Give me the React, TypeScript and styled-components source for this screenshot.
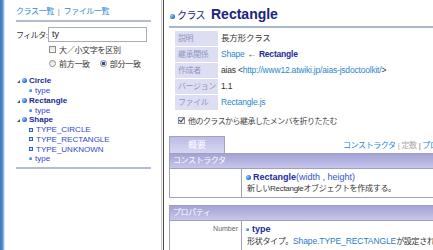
import React from "react";
import styled, { createGlobalStyle } from "styled-components";

const GlobalStyle = createGlobalStyle`
  html, body { margin: 0; padding: 0; background: #fff; }
  body {
    font-family: "Liberation Sans", "Noto Sans CJK JP", sans-serif;
    color: #333;
  }
`;

const Screen = styled.div`
  display: flex;
  width: 433px;
  height: 250px;
  overflow: hidden;
  background: #fff;
`;

const WindowEdge = styled.div`
  flex: none;
  width: 5px;
  background: linear-gradient(to right, #3d75ba 0, #5b93d3 3px, #c7daee 4px, #eef3f8 5px);
`;

/* ---------- sidebar ---------- */

const Sidebar = styled.aside`
  flex: none;
  width: 156px;
  box-sizing: border-box;
  padding: 6px 10px 0 11px;
`;

const SideNav = styled.nav`
  font-size: 8px;
  letter-spacing: -0.4px;
  line-height: 12px;
  padding-bottom: 2px;
  border-bottom: 2px solid #b3bdd0;
`;

const Link = styled.a<{ $bold?: boolean; $muted?: boolean }>`
  color: ${(p) => (p.$muted ? "#a8a8a8" : "#2a88d0")};
  font-weight: ${(p) => (p.$bold ? "bold" : "normal")};
  text-decoration: none;
`;

const Sep = styled.span<{ $tight?: boolean; $tone?: string }>`
  color: ${(p) => p.$tone ?? "#8585a8"};
  margin: 0 ${(p) => (p.$tight ? 2 : 4)}px;
`;

const FilterRow = styled.div`
  display: flex;
  align-items: center;
  height: 16px;
  margin-top: 4px;
`;

const FieldLabel = styled.span`
  width: 32px;
  font-size: 8px;
  letter-spacing: -0.5px;
  color: #333;
`;

const TextBox = styled.div`
  width: 99px;
  height: 15px;
  box-sizing: border-box;
  border: 1px solid #a6adb8;
  font-size: 9px;
  line-height: 13px;
  padding: 0 3px;
  color: #222;
`;

const OptionRow = styled.div`
  display: flex;
  align-items: center;
  height: 14px;
  margin-left: 33px;
  font-size: 8px;
  letter-spacing: -0.3px;
  color: #333;
`;

const Check = styled.span<{ $checked?: boolean }>`
  position: relative;
  display: inline-block;
  flex: none;
  width: 7px;
  height: 7px;
  box-sizing: border-box;
  border: 1px solid #8c8c8c;
  background: linear-gradient(#e6e6e6, #fafafa);
  margin-right: 3px;
  &::after {
    content: "";
    display: ${(p) => (p.$checked ? "block" : "none")};
    position: absolute;
    left: 1px;
    top: -1px;
    width: 2px;
    height: 4px;
    border: solid #2a3a7a;
    border-width: 0 1px 1px 0;
    transform: rotate(40deg);
  }
`;

const Radio = styled.span<{ $checked?: boolean }>`
  display: inline-block;
  flex: none;
  width: 7px;
  height: 7px;
  box-sizing: border-box;
  border-radius: 50%;
  border: 1px solid #8c8c8c;
  background: ${(p) =>
    p.$checked
      ? "radial-gradient(circle, #2c4a9a 0 1.6px, #e8eef8 2px)"
      : "linear-gradient(#e2e2e2, #fafafa)"};
  margin-right: 3px;
`;

const RadioGap = styled.span`
  width: 10px;
`;

const Tree = styled.ul`
  list-style: none;
  margin: 6px 0 0;
  padding: 0;
`;

const TreeRow = styled.li<{ $indent: number }>`
  display: flex;
  align-items: center;
  height: 9.75px;
  padding-left: ${(p) => p.$indent}px;
  font-size: 8px;
  white-space: nowrap;
`;

const Toggle = styled.span`
  width: 0;
  height: 0;
  border-left: 3px solid transparent;
  border-bottom: 3px solid #555;
  margin-right: 2px;
  margin-top: 2px;
`;

const Dot = styled.span<{ $size: number; $gap: number }>`
  display: inline-block;
  flex: none;
  width: ${(p) => p.$size}px;
  height: ${(p) => p.$size}px;
  border-radius: 50%;
  background: radial-gradient(circle at 35% 35%, #9ccaff, #1f6fd8 65%);
  margin-right: ${(p) => p.$gap}px;
`;

const ConstMark = styled.span`
  flex: none;
  width: 4px;
  height: 4px;
  box-sizing: border-box;
  border: 1px solid #2d5fd0;
  background: #d6e4ff;
  margin-right: 3px;
`;

const TreeName = styled.span<{ $parent?: boolean }>`
  color: ${(p) => (p.$parent ? "#1b2a8f" : "#3344cc")};
  font-weight: ${(p) => (p.$parent ? "bold" : "normal")};
`;

const SideRule = styled.div`
  margin-top: 3px;
  height: 2px;
  background: #b3bdd0;
`;

const Splitter = styled.div`
  flex: none;
  width: 3px;
  box-sizing: border-box;
  border-left: 1px solid #cdcdcd;
  border-right: 1px solid #4d4d4d;
  background: #f2f2f2;
`;

/* ---------- main ---------- */

const Main = styled.main`
  flex: 1;
  min-width: 0;
  overflow: hidden;
  padding-left: 5px;
`;

const MainInner = styled.div`
  width: 330px;
`;

const Heading = styled.h1`
  display: flex;
  align-items: baseline;
  height: 28px;
  box-sizing: border-box;
  margin: 0;
  padding: 6px 0 0 1px;
  border-bottom: 2px solid #aab6cc;
  line-height: 16px;
  color: #1a237e;
  white-space: nowrap;
`;

const HeadKind = styled.span`
  font-size: 10px;
  font-weight: normal;
  letter-spacing: -0.6px;
  margin-right: 6px;
`;

const HeadName = styled.span`
  font-size: 14px;
  font-weight: bold;
`;

const InfoTable = styled.div`
  display: grid;
  grid-template-columns: 43px 1fr;
  grid-auto-rows: 15px;
  row-gap: 1px;
  column-gap: 3px;
  margin: 3px 0 0 6px;
`;

const InfoLabel = styled.div`
  background: #dedef3;
  color: #8b96c0;
  font-size: 8px;
  letter-spacing: -0.4px;
  line-height: 15px;
  padding-left: 3px;
  white-space: nowrap;
`;

const InfoValue = styled.div`
  font-size: 8.5px;
  line-height: 15px;
  color: #333;
  white-space: nowrap;
  letter-spacing: -0.2px;
`;

const Arrow = styled.span`
  color: #333;
  margin: 0 3px;
`;

const InheritRow = styled.div`
  display: flex;
  align-items: center;
  height: 16px;
  margin: 2px 0 0 9px;
  font-size: 8px;
  letter-spacing: -0.55px;
  color: #444;
`;

const TabBar = styled.div`
  display: flex;
  align-items: flex-end;
  height: 17px;
  margin-top: 8px;
`;

const Tab = styled.div`
  width: 56px;
  height: 17px;
  box-sizing: border-box;
  border: 1px solid #a2a2c4;
  border-bottom: none;
  background: linear-gradient(#bcbce6, #d6d6f2);
  color: #fff;
  font-size: 9px;
  line-height: 16px;
  text-align: center;
`;

const TabLinks = styled.div`
  margin-left: 118px;
  padding-bottom: 3px;
  font-size: 8px;
  letter-spacing: -0.4px;
  white-space: nowrap;
`;

const Section = styled.section<{ $gap: number }>`
  width: 320px;
  margin-top: ${(p) => p.$gap}px;
  border: 1px solid #a0a0ba;
`;

const SectionHead = styled.div`
  height: 14px;
  background: linear-gradient(#a2a2d6, #c6c6ec);
  color: #fff;
  font-size: 8px;
  letter-spacing: -0.4px;
  line-height: 14px;
  padding-left: 3px;
`;

const MemberRow = styled.div`
  display: grid;
  grid-template-columns: 72px 1fr;
  border-top: 1px solid #a0a0ba;
`;

const MemberType = styled.div`
  border-right: 1px solid #a0a0ba;
  text-align: right;
  padding: 2px 3px 0 0;
  font-size: 7px;
  line-height: 12px;
  color: #666;
`;

const MemberBody = styled.div`
  padding: 2px 0 2px 4px;
  line-height: 12px;
  white-space: nowrap;
`;

const MemberTitle = styled.div`
  display: flex;
  align-items: center;
  font-size: 9px;
`;

const MemberDesc = styled.div`
  font-size: 8px;
  letter-spacing: -0.3px;
  color: #333;
  padding-left: 1px;
`;

const Strong = styled.span`
  color: #1a2a9a;
  font-weight: bold;
`;

const Params = styled.span`
  color: #2f55c8;
`;

const CodeRef = styled.span`
  color: #2a7cc8;
  font-size: 8.5px;
  letter-spacing: -0.1px;
`;

type TreeItem = { name: string; kind: "class" | "prop" | "const" };

const treeItems: TreeItem[] = [
  { name: "Circle", kind: "class" },
  { name: "type", kind: "prop" },
  { name: "Rectangle", kind: "class" },
  { name: "type", kind: "prop" },
  { name: "Shape", kind: "class" },
  { name: "TYPE_CIRCLE", kind: "const" },
  { name: "TYPE_RECTANGLE", kind: "const" },
  { name: "TYPE_UNKNOWN", kind: "const" },
  { name: "type", kind: "prop" },
];

const info: [string, React.ReactNode][] = [
  ["説明", "長方形クラス"],
  [
    "継承関係",
    <>
      <Link>Shape</Link>
      <Arrow>←</Arrow>
      <Strong>Rectangle</Strong>
    </>,
  ],
  [
    "作成者",
    <>
      aias &lt;<Link>http://www12.atwiki.jp/aias-jsdoctoolkit/</Link>&gt;
    </>,
  ],
  ["バージョン", "1.1"],
  ["ファイル", <Link>Rectangle.js</Link>],
];

export default function App() {
  return (
    <>
      <GlobalStyle />
      <Screen>
        <WindowEdge />
        <Sidebar>
          <SideNav>
            <Link>クラス一覧</Link>
            <Sep $tone="#888">|</Sep>
            <Link>ファイル一覧</Link>
          </SideNav>
          <FilterRow>
            <FieldLabel>フィルタ:</FieldLabel>
            <TextBox>ty</TextBox>
          </FilterRow>
          <OptionRow>
            <Check />
            大／小文字を区別
          </OptionRow>
          <OptionRow>
            <Radio />
            前方一致
            <RadioGap />
            <Radio $checked />
            部分一致
          </OptionRow>
          <Tree>
            {treeItems.map((item, i) =>
              item.kind === "class" ? (
                <TreeRow key={i} $indent={1}>
                  <Toggle />
                  <Dot $size={5} $gap={2} />
                  <TreeName $parent>{item.name}</TreeName>
                </TreeRow>
              ) : item.kind === "prop" ? (
                <TreeRow key={i} $indent={13}>
                  <Dot $size={3} $gap={3} />
                  <TreeName>{item.name}</TreeName>
                </TreeRow>
              ) : (
                <TreeRow key={i} $indent={13}>
                  <ConstMark />
                  <TreeName>{item.name}</TreeName>
                </TreeRow>
              )
            )}
          </Tree>
          <SideRule />
        </Sidebar>
        <Splitter />
        <Main>
          <MainInner>
            <Heading>
              <Dot $size={5} $gap={2} />
              <HeadKind>クラス</HeadKind>
              <HeadName>Rectangle</HeadName>
            </Heading>
            <InfoTable>
              {info.map(([label, value]) => (
                <React.Fragment key={label}>
                  <InfoLabel>{label}</InfoLabel>
                  <InfoValue>{value}</InfoValue>
                </React.Fragment>
              ))}
            </InfoTable>
            <InheritRow>
              <Check $checked />
              他のクラスから継承したメンバを折りたたむ
            </InheritRow>
            <TabBar>
              <Tab>概要</Tab>
              <TabLinks>
                <Link>コンストラクタ</Link>
                <Sep $tight $tone="#aaa">|</Sep>
                <Link $muted>定数</Link>
                <Sep $tight $tone="#7a5a9a">|</Sep>
                <Link>プロパティ</Link>
              </TabLinks>
            </TabBar>
            <Section $gap={0}>
              <SectionHead>コンストラクタ</SectionHead>
              <MemberRow>
                <MemberType />
                <MemberBody>
                  <MemberTitle>
                    <Dot $size={5} $gap={2} />
                    <Strong>Rectangle</Strong>
                    <Params>(width , height)</Params>
                  </MemberTitle>
                  <MemberDesc>新しいRectangleオブジェクトを作成する。</MemberDesc>
                </MemberBody>
              </MemberRow>
            </Section>
            <Section $gap={7}>
              <SectionHead>プロパティ</SectionHead>
              <MemberRow>
                <MemberType>Number</MemberType>
                <MemberBody>
                  <MemberTitle>
                    <Dot $size={3} $gap={3} />
                    <Strong>type</Strong>
                  </MemberTitle>
                  <MemberDesc>
                    形状タイプ。<CodeRef>Shape.TYPE_RECTANGLE</CodeRef>が設定されています。
                  </MemberDesc>
                </MemberBody>
              </MemberRow>
            </Section>
          </MainInner>
        </Main>
      </Screen>
    </>
  );
}
